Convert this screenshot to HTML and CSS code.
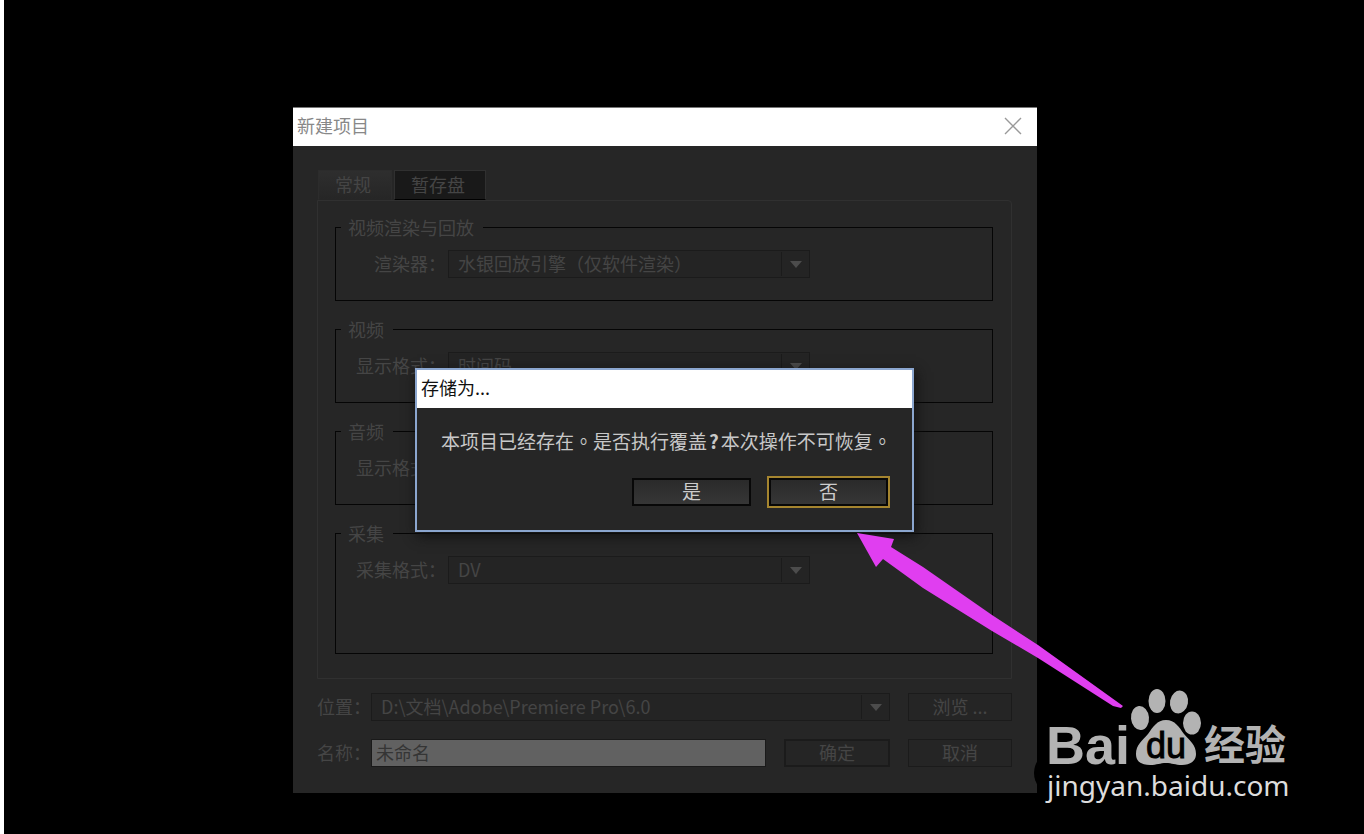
FILE: index.html
```html
<!DOCTYPE html>
<html lang="zh-CN">
<head>
<meta charset="utf-8">
<title>新建项目</title>
<link rel="stylesheet" href="styles.css">
</head>
<body>
<main class="desktop">
  <section class="window project" aria-labelledby="project-title">
    <header class="titlebar">
      <h1 class="title" id="project-title">新建项目</h1>
      <button class="close" type="button" aria-label="关闭">
        <svg width="18" height="18" viewBox="0 0 18 18"><path d="M1 1 17 17M17 1 1 17" fill="none" stroke="#999" stroke-width="1.4"/></svg>
      </button>
    </header>
    <form class="project-body">
      <div class="tabs">
        <button class="tab tab-active" type="button">常规</button>
        <button class="tab" type="button">暂存盘</button>
      </div>
      <div class="panel">
        <fieldset class="group">
          <legend>视频渲染与回放</legend>
          <div class="row">
            <label class="label" for="renderer">渲染器：</label>
            <span class="dropdown"><select id="renderer"><option>水银回放引擎（仅软件渲染）</option></select></span>
          </div>
        </fieldset>
        <fieldset class="group">
          <legend>视频</legend>
          <div class="row">
            <label class="label" for="video">显示格式：</label>
            <span class="dropdown"><select id="video"><option>时间码</option></select></span>
          </div>
        </fieldset>
        <fieldset class="group">
          <legend>音频</legend>
          <div class="row">
            <label class="label" for="audio">显示格式：</label>
            <span class="dropdown"><select id="audio"><option></option></select></span>
          </div>
        </fieldset>
        <fieldset class="group group-tall">
          <legend>采集</legend>
          <div class="row">
            <label class="label" for="capture">采集格式：</label>
            <span class="dropdown"><select id="capture"><option>DV</option></select></span>
          </div>
        </fieldset>
      </div>
      <div class="footer">
        <div class="line">
          <label for="location">位置：</label>
          <span class="dropdown dropdown-wide"><select id="location"><option>D:\文档\Adobe\Premiere Pro\6.0</option></select></span>
          <button class="dim-button" type="button">浏览 ...</button>
        </div>
        <div class="line">
          <label for="name">名称：</label>
          <input class="name" id="name" type="text" value="未命名">
          <button class="dim-button dim-default" type="button">确定</button>
          <button class="dim-button" type="button">取消</button>
        </div>
      </div>
    </form>
  </section>

  <section class="window confirm" role="alertdialog" aria-labelledby="confirm-title">
    <header class="titlebar confirm-titlebar">
      <h2 class="title" id="confirm-title">存储为...</h2>
    </header>
    <div class="confirm-body">
      <p class="message">本项目已经存在<span class="stop" lang="zh-TW">。</span>是否执行覆盖<b>?</b>本次操作不可恢复<span class="stop" lang="zh-TW">。</span></p>
      <div class="actions">
        <button class="action" type="button">是</button>
        <span class="focus"><button class="action" type="button">否</button></span>
      </div>
    </div>
  </section>

  <svg class="arrow" width="268" height="180" viewBox="0 0 268 180" aria-hidden="true">
    <path d="M1 1 38 7 35 15 67 35 136 83 182 113 267 174 265 176 257 174 182 126 136 99 67 56 27 27 20 35Z" fill="#e03ef0"/>
  </svg>

  <svg class="brand" width="270" height="130" viewBox="0 0 270 130" role="img" aria-label="Baidu 经验">
    <ellipse cx="17" cy="92" rx="16" ry="19" fill="#000"/>
    <g fill="#b3b3b3">
      <text class="brand-latin" x="13" y="83">Bai</text>
      <ellipse cx="107" cy="37" rx="9" ry="12" transform="rotate(-5 107 37)"/>
      <ellipse cx="124" cy="20" rx="8.500" ry="12"/>
      <ellipse cx="146" cy="21" rx="9" ry="11.500" transform="rotate(10 146 21)"/>
      <ellipse cx="159" cy="42" rx="9" ry="11.500"/>
      <path d="M133 39C124 39 120 46 115 53 109 60 103 64 103 73 103 81 109 84 117 84 124 84 127 82 133 82 139 82 142 84 149 84 157 84 163 80 163 73 163 64 157 60 151 53 146 46 142 39 133 39Z"/>
      <text class="brand-hanzi" x="171" y="79">经验</text>
    </g>
    <text class="brand-du" x="113" y="77">du</text>
    <text class="brand-url" x="14" y="115">jingyan.baidu.com</text>
  </svg>
</main>
</body>
</html>
```
FILE: styles.css
```css
* { box-sizing: border-box; }

body {
  margin: 0;
  background: #fff;
  font-family: "Noto Sans CJK SC", sans-serif;
  font-size: 18px;
  font-weight: 400;
  line-height: 24px;
  color: #454545;
}

button, input, select {
  font: inherit;
  color: inherit;
  margin: 0;
  padding: 0;
}

.desktop {
  position: relative;
  min-height: 100vh;
  margin-left: 4px;
  background: #000;
  overflow: hidden;
}

.window {
  position: absolute;
  background: #262626;
}

.project {
  left: 289px;
  top: 107px;
  width: 744px;
}

.titlebar {
  display: flex;
  align-items: center;
  justify-content: space-between;
  height: 39px;
  padding: 0 15px 4px 4px;
  background: #fff;
  border-top: 1px solid #777;
  color: #888;
}

.title {
  margin: 0;
  font-size: 18px;
  font-weight: 400;
}

.close {
  display: flex;
  padding-top: 2px;
  border: 0;
  background: none;
}

.project-body { padding: 24px 25px 26px 24px; }

.tabs {
  display: flex;
  gap: 2px;
  padding-left: 1px;
}

.tab {
  height: 30px;
  padding: 0 20px 2px 16px;
  border: 1px solid #303030;
  border-bottom: 1px solid #000;
  background: #191919;
}

.tab-active {
  padding: 0 20px 2px 16px;
  border-color: #2c2c2c #2c2c2c #262626;
  background: linear-gradient(#2e2e2e, #262626);
}

.panel {
  display: flex;
  flex-direction: column;
  gap: 16px;
  padding: 14px 18px 24px 17px;
  border: 1px solid #303030;
  border-radius: 0 4px 0 0;
}

.group {
  margin: 0;
  min-width: 0;
  height: 86px;
  padding: 11px 20px 0;
  border: 1px solid #050505;
}

.group-tall { height: 133px; }

.group legend {
  margin-left: -15px;
  padding: 0 9px 0 7px;
}

.row {
  display: flex;
  align-items: center;
}

.label {
  width: 92px;
  padding: 0 2px 3px 0;
  text-align: right;
}

.dropdown {
  position: relative;
  display: flex;
  width: 362px;
}

.dropdown-wide { flex: 1; }

.dropdown::before {
  content: "";
  position: absolute;
  top: 2px;
  bottom: 2px;
  right: 28px;
  border-left: 1px solid #1b1b1b;
}

.dropdown::after {
  content: "";
  position: absolute;
  top: 11px;
  right: 8px;
  border: 6px solid transparent;
  border-top: 7px solid #4c4c4c;
  border-bottom: 0;
}

.dropdown select {
  appearance: none;
  width: 100%;
  height: 28px;
  padding: 0 30px 3px 9px;
  border: 1px solid #1b1b1b;
  border-radius: 0;
  background: #242424;
}

.footer {
  display: flex;
  flex-direction: column;
  gap: 18px;
  padding-top: 14px;
}

.line {
  display: flex;
  align-items: center;
  gap: 18px;
}

.line label {
  margin-right: -18px;
  padding-bottom: 2px;
}

.name {
  flex: 1;
  min-width: 0;
  height: 28px;
  padding: 0 4px 2px;
  border: 1px solid #1a1a1a;
  background: #616161;
  color: #353535;
}

.dim-button {
  width: 104px;
  height: 28px;
  padding-bottom: 2px;
  border: 1px solid #1b1b1b;
  background: #252525;
  line-height: 22px;
}

.dim-default {
  width: 106px;
  border-width: 2px;
}

.confirm {
  left: 411px;
  top: 368px;
  width: 499px;
  border: 2px solid #8ba6cf;
  box-shadow: 2px 4px 12px #111;
}

.confirm-titlebar {
  height: 38px;
  padding: 0 4px 4px;
  border: 0;
  color: #111;
}

.confirm-body { padding: 21px 22px 22px 24px; }

.message {
  margin: 0;
  font-size: 19px;
  color: #c8c8c8;
  white-space: nowrap;
}

.message b { margin: 0 2px; }

.stop { font-family: "Noto Sans CJK TC", sans-serif; }

.actions {
  display: flex;
  justify-content: flex-end;
  align-items: center;
  gap: 16px;
  padding-top: 23px;
}

.action {
  display: block;
  width: 119px;
  height: 28px;
  padding-bottom: 3px;
  border: 2px solid #080808;
  background: linear-gradient(#2a2a2a, #363636);
  color: #ccc;
  font-size: 19px;
  line-height: 20px;
}

.focus {
  border: 2px solid #a5852f;
}

.arrow {
  position: absolute;
  left: 852px;
  top: 532px;
}

.brand {
  position: absolute;
  left: 1029px;
  top: 681px;
}

.brand-latin {
  font: 700 54px "Liberation Sans", sans-serif;
}

.brand-du {
  font: 400 36px "Liberation Sans", sans-serif;
  fill: #000;
  stroke: #000;
  stroke-width: 1px;
}

.brand-hanzi {
  font: 700 41px "Noto Sans CJK SC", sans-serif;
}

.brand-url {
  font: 400 28px "Noto Sans", sans-serif;
  fill: #ddd;
}
```
